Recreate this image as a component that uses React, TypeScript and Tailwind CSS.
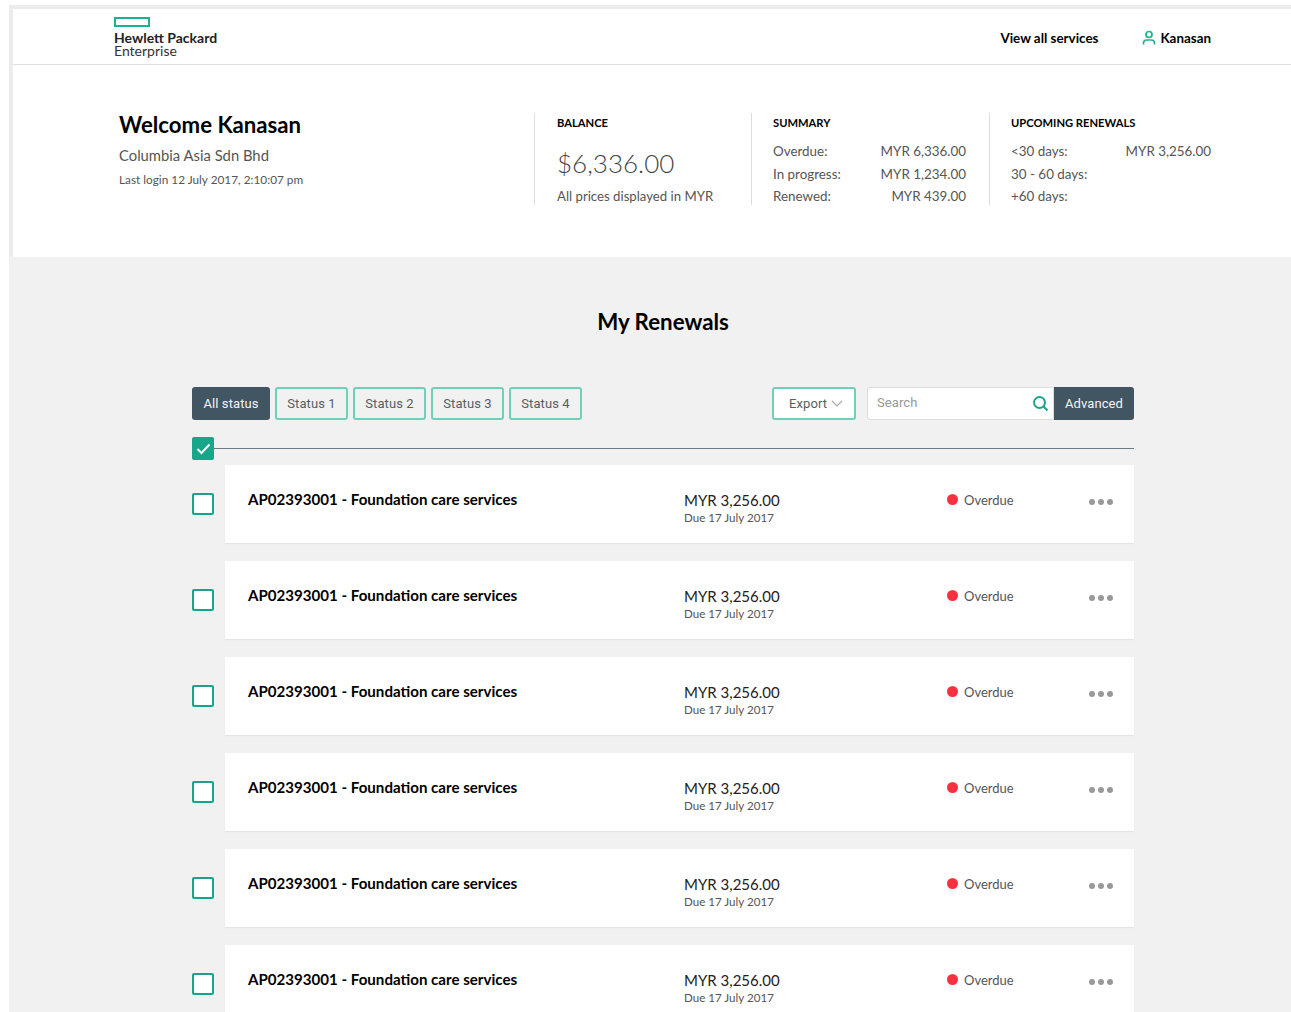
const statuses = ['Status 1', 'Status 2', 'Status 3', 'Status 4'];
const renewals = [1, 2, 3, 4, 5, 6];

const Row = ({ label, value }: { label: string; value?: string }) => (
  <div className="flex justify-between h-[22.5px] items-center">
    <span>{label}</span>
    {value && <span>{value}</span>}
  </div>
);

const RenewalRow = () => (
  <div className="flex items-start">
    <div className="w-[33px] pt-[28px] shrink-0">
      <div className="w-[22px] h-[22px] border-2 border-[#17a689] rounded-[2px] bg-white" />
    </div>
    <div className="flex-1 h-[78px] bg-white flex items-start shadow-[0_1px_1px_rgba(0,0,0,0.05)]">
      <div className="w-[459px] pl-[23px] pt-[22px] text-[15.1px] leading-[24px] font-bold text-black shrink-0">
        AP02393001 - Foundation care services
      </div>
      <div className="w-[263px] pt-[25px] shrink-0">
        <div className="text-[15px] leading-[20px] text-[#222]">MYR 3,256.00</div>
        <div className="text-[11.6px] leading-[15px] text-[#555]">Due 17 July 2017</div>
      </div>
      <div className="flex items-center pt-[25px] flex-1">
        <span className="w-[11px] h-[11px] rounded-full bg-[#f5333f] mr-[6px] -mt-[1px]" />
        <span className="text-[13px] leading-[20px] text-[#555]">Overdue</span>
      </div>
      <div className="flex gap-[3px] pt-[34px] pr-[21px]">
        <span className="w-[6px] h-[6px] rounded-full bg-[#999]" />
        <span className="w-[6px] h-[6px] rounded-full bg-[#999]" />
        <span className="w-[6px] h-[6px] rounded-full bg-[#999]" />
      </div>
    </div>
  </div>
);

export default function App() {
  return (
    <div className="font-['Lato','Noto_Sans',sans-serif] h-[1012px] overflow-hidden bg-white pl-[9px] pt-[5px]">
      <div className="h-full border-t-4 border-l-4 border-[#ececec]">
        <header className="h-[56px] border-b border-[#dedede] flex items-center pl-[101px] pr-[80px]">
          <div className="flex-1 pt-[1px]">
            <div className="w-[36px] h-[10px] border-2 border-[#1bb28f]" />
            <div className="text-[14px] leading-[14px] font-bold text-[#222] mt-[4px]">Hewlett Packard</div>
            <div className="text-[14px] leading-[13px] text-[#333] -mt-[1px] mb-[1px]">Enterprise</div>
          </div>
          <div className="text-[13.4px] font-bold text-black mr-[44px] pt-[3px]">View all services</div>
          <svg width="14" height="16" viewBox="0 0 14 16" fill="none" stroke="#1bb28f" strokeWidth="1.7" className="mr-[4px] mt-[2px]">
            <circle cx="7" cy="4.5" r="3" />
            <path d="M1.5 14.5v-1.5a3 3 0 0 1 3-3h5a3 3 0 0 1 3 3v1.5" />
          </svg>
          <div className="text-[13.4px] font-bold text-black pt-[3px]">Kanasan</div>
        </header>

        <section className="h-[192px] flex pl-[106px] pt-[48px] text-[13.4px] text-[#555]">
          <div className="w-[415px] shrink-0">
            <h1 className="text-[22.2px] leading-[24px] font-bold text-black">Welcome Kanasan</h1>
            <div className="text-[14.8px] leading-[20px] mt-[8px]">Columbia Asia Sdn Bhd</div>
            <div className="text-[11.8px] leading-[16px] mt-[7px]">Last login 12 July 2017, 2:10:07 pm</div>
          </div>
          <div className="w-[217px] h-[92px] shrink-0 border-l border-[#dedede] pl-[22px]">
            <div className="text-[11.2px] leading-[16px] font-bold text-black pt-[2px]">BALANCE</div>
            <div className="text-[26px] leading-[32px] mt-[16px] font-light text-[#444]">$6,336.00</div>
            <div className="text-[13.2px] leading-[20px] mt-[7px]">All prices displayed in MYR</div>
          </div>
          <div className="w-[238px] h-[92px] shrink-0 border-l border-[#dedede] pl-[21px] pr-[23px]">
            <div className="text-[11.2px] leading-[16px] font-bold text-black mb-[9px] pt-[2px]">SUMMARY</div>
            <Row label="Overdue:" value="MYR 6,336.00" />
            <Row label="In progress:" value="MYR 1,234.00" />
            <Row label="Renewed:" value="MYR 439.00" />
          </div>
          <div className="w-[223px] h-[92px] shrink-0 border-l border-[#dedede] pl-[21px] pr-[1px]">
            <div className="text-[11.2px] leading-[16px] font-bold text-black mb-[9px] pt-[2px]">UPCOMING RENEWALS</div>
            <Row label="<30 days:" value="MYR 3,256.00" />
            <Row label="30 - 60 days:" />
            <Row label="+60 days:" />
          </div>
        </section>

        <main className="h-full bg-[#f1f1f1] -ml-[4px] pt-[50px]">
          <h2 className="text-[22.3px] leading-[30px] font-bold text-black text-center pl-[26px]">My Renewals</h2>
          <div className="ml-[183px] w-[942px] mt-[50px] font-['Roboto',sans-serif]">
            <div className="flex items-center h-[33px] text-[13px] tracking-[0.1px]">
              <button className="h-[33px] w-[78px] rounded-[3px] bg-[#425563] text-[#f2f4f5]">All status</button>
              {statuses.map((s) => (
                <button key={s} className="h-[33px] w-[73px] ml-[5px] rounded-[3px] border-2 border-[#6fd0ba] text-[#555f66]">{s}</button>
              ))}
              <div className="flex-1" />
              <button className="h-[33px] w-[84px] rounded-[3px] border-2 border-[#6fd0ba] bg-white text-[#555f66] flex items-center pl-[15px] gap-[4px]">
                Export
                <svg width="12" height="7" viewBox="0 0 12 7" fill="none" stroke="#aaa" strokeWidth="1.2"><path d="M1 1l5 5 5-5" /></svg>
              </button>
              <div className="h-[33px] w-[187px] ml-[11px] bg-white border border-[#ddd] rounded-l-[3px] flex items-center pl-[9px] pr-[4px] text-[#999] text-[13px]">
                <span className="flex-1 -mt-[2px]">Search</span>
                <svg width="17" height="17" viewBox="0 0 17 17" fill="none" stroke="#17a689" strokeWidth="2"><circle cx="7.5" cy="7.5" r="5.5" /><path d="M11.5 11.5l4 4" /></svg>
              </div>
              <button className="h-[33px] w-[80px] rounded-r-[3px] bg-[#425563] text-[#f2f4f5]">Advanced</button>
            </div>
            <div className="relative h-[45px] font-['Lato',sans-serif]">
              <div className="absolute left-0 right-0 top-[28px] h-px bg-[#6c7a86]" />
              <div className="absolute left-0 top-[17px] w-[22px] h-[23px] rounded-[2px] bg-[#17a689] flex items-center justify-center">
                <svg width="15" height="12" viewBox="0 0 15 12" fill="none" stroke="white" strokeWidth="2"><path d="M1.5 6l4 4 8-8.5" /></svg>
              </div>
            </div>
            <div className="flex flex-col gap-[18px] font-['Lato',sans-serif]">
              {renewals.map((r) => (
                <RenewalRow key={r} />
              ))}
            </div>
          </div>
        </main>
      </div>
    </div>
  );
}
